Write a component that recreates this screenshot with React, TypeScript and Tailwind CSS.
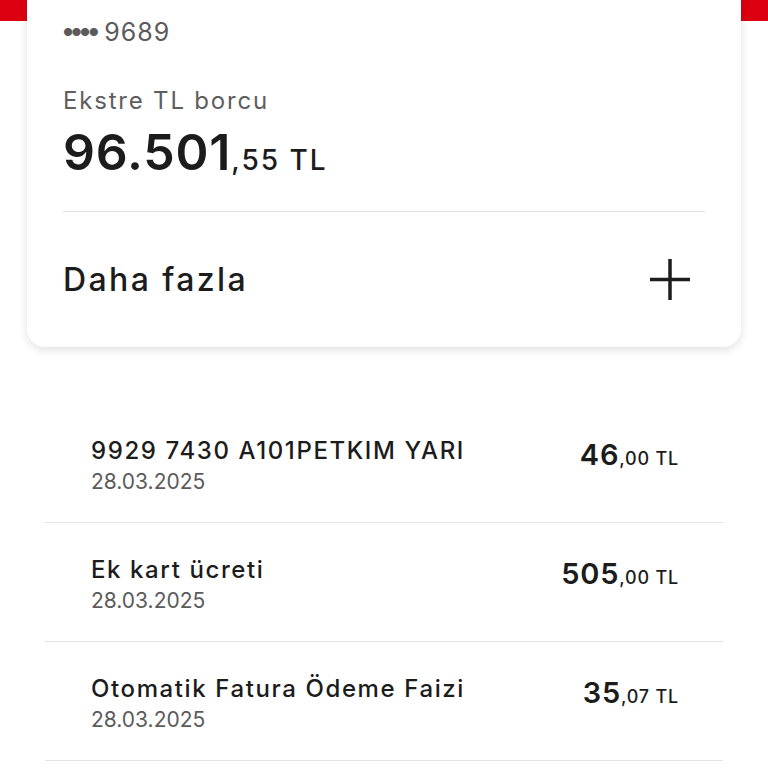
const transactions = [
  { id: 1, title: '9929 7430 A101PETKIM YARI', date: '28.03.2025', whole: '46', cents: '00' },
  { id: 2, title: 'Ek kart ücreti', date: '28.03.2025', whole: '505', cents: '00' },
  { id: 3, title: 'Otomatik Fatura Ödeme Faizi', date: '28.03.2025', whole: '35', cents: '07' },
];

export default function App() {
  return (
    <div className="min-h-[768px] bg-white text-[#1c1c1c]" style={{ fontFamily: 'Inter, "Noto Sans", sans-serif' }}>
      <div className="h-[21px] bg-[#dc0010]" />

      <div className="relative mx-[27px] -mt-[41px] rounded-[18px] bg-white px-[36px] pt-[36px] pb-[47px] shadow-[0_3px_10px_rgba(0,0,0,0.12)]">
        <div className="flex items-center gap-[7px] text-[25px] leading-[32px] text-[#5b5b5b]">
          <span className="text-[11px] tracking-[-1.5px]">●●●●</span>
          <span className="tracking-[1px]">9689</span>
        </div>

        <div className="mt-[38px] text-[24px] leading-[30px] tracking-[1.8px] text-[#5e5e5e]">Ekstre TL borcu</div>
        <div className="mt-[8px] flex items-baseline leading-[56px]">
          <span className="text-[50px] font-semibold tracking-[0.8px]">96.501</span>
          <span className="text-[28px] font-medium tracking-[2px]">,55 TL</span>
        </div>

        <div className="mt-[23px] h-px bg-[#e2e2e2]" />

        <div className="mt-[47px] flex items-center justify-between">
          <span className="text-[32px] font-medium leading-[40px] tracking-[2.4px]">Daha fazla</span>
          <svg className="mr-[15px]" width="40" height="41" viewBox="0 0 40 41" fill="none" stroke="#1e1e1e" strokeWidth="3.5">
            <path d="M0 20.5H40M20 0V41" />
          </svg>
        </div>
      </div>

      <div className="mx-[45px] mt-[57px]">
        {transactions.map((t) => (
          <div key={t.id} className="flex justify-between border-b border-[#e3e3e3] px-[46px] pt-[32px] pb-[26px]">
            <div>
              <div className="text-[24px] font-medium leading-[30px] tracking-[1.6px]">{t.title}</div>
              <div className="mt-[2px] text-[21px] leading-[28px] text-[#5b5b5b]">{t.date}</div>
            </div>
            <div className="-mr-[2px] mt-[3px] flex items-baseline leading-[32px] tracking-[0.8px]">
              <span className="text-[29px] font-semibold">{t.whole}</span>
              <span className="text-[18px] font-medium">,{t.cents} TL</span>
            </div>
          </div>
        ))}
      </div>
    </div>
  );
}
